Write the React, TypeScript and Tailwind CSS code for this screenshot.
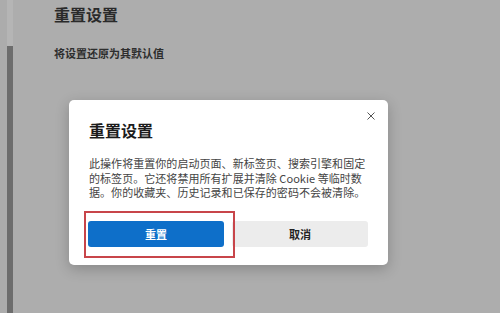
import React from "react";

export default function App() {
  const font = { fontFamily: '"Noto Sans CJK SC", "Noto Sans", sans-serif' };
  return (
    <div
      className="relative w-[500px] h-[313px] overflow-hidden bg-[#adadad] flex"
      style={font}
    >
      {/* left edge + scrollbar */}
      <div className="w-[7px] h-full bg-[#acacac]" />
      <div className="w-[6px] h-full flex flex-col">
        <div className="h-[46px] bg-[#b5b5b5]" />
        <div className="flex-1 bg-[#6d6d6d]" />
      </div>

      {/* background page content */}
      <div className="pl-[41px] pt-[4px] flex flex-col">
        <div className="text-[16px] leading-[20px] font-bold text-[#2a2a2a]">
          重置设置
        </div>
        <div className="mt-[21.5px] text-[11px] leading-[15px] font-semibold text-[#2e2e2e]">
          将设置还原为其默认值
        </div>
      </div>

      {/* modal dialog */}
      <div className="absolute left-[69px] top-[100px] w-[319px] h-[165px] bg-white rounded-[5px] shadow-[0_4px_14px_rgba(0,0,0,0.22)] pt-[20px] px-[20px] pb-[18px] flex flex-col">
        <svg
          className="absolute right-[13px] top-[12px]"
          width="8"
          height="8"
          viewBox="0 0 8 8"
        >
          <path
            d="M0.5 0.5 L7.5 7.5 M7.5 0.5 L0.5 7.5"
            stroke="#555"
            strokeWidth="1"
            fill="none"
          />
        </svg>
        <div className="text-[16px] leading-[20px] font-bold text-[#1b1b1b]">
          重置设置
        </div>
        <div className="mt-[16px] text-[11px] leading-[14.7px] tracking-[0.05px] text-[#444] whitespace-nowrap">
          <div>此操作将重置你的启动页面、新标签页、搜索引擎和固定</div>
          <div>
            的标签页。它还将禁用所有扩展并清除 Cookie 等临时数
          </div>
          <div>据。你的收藏夹、历史记录和已保存的密码不会被清除。</div>
        </div>
        <div className="mt-[21px] grid grid-cols-2 gap-[8px] ml-[-1px]">
          <div className="h-[26px] rounded-[3px] bg-[#0e6fc9] flex items-center justify-center text-white text-[11px] font-semibold">
            重置
          </div>
          <div className="h-[26px] rounded-[3px] bg-[#ececec] flex items-center justify-center text-[#222] text-[11px] font-semibold">
            取消
          </div>
        </div>
      </div>

      {/* red annotation box */}
      <div className="absolute left-[84px] top-[211px] w-[151px] h-[47px] border-2 border-[#c8454a]" />
    </div>
  );
}
